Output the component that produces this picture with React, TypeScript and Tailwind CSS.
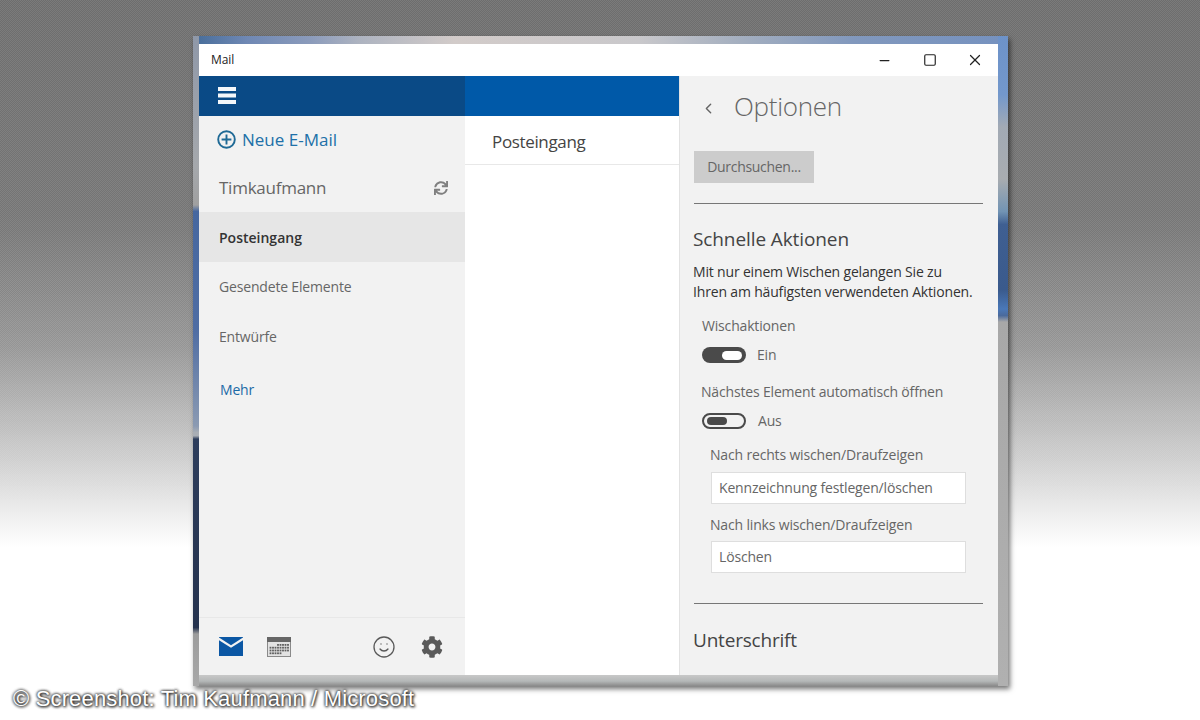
import React from "react";
import { ChevronLeft, Minus, Square, X, Smile } from "lucide-react";
import { FaCog, FaSync } from "react-icons/fa";

const font = "font-['Open_Sans','Noto_Sans',sans-serif]";

function MailIcon() {
  return (
    <svg width="24" height="19" viewBox="0 0 24 19">
      <path d="M0 3.2 L12 10.8 L24 3.2 V19 H0 Z" fill="#0b57a4" />
      <path d="M0 0 H24 V0.6 L12 8.2 L0 0.6 Z" fill="#0b57a4" />
    </svg>
  );
}

function CalendarIcon() {
  const dots = [];
  for (let r = 0; r < 4; r++) {
    for (let c = 0; c < 8; c++) {
      const off = (r === 0 && c < 3) || (r === 3 && c > 4);
      if (!off) dots.push(<rect key={r + "-" + c} x={2.6 + c * 2.5} y={7 + r * 2.8} width="1.8" height="1.8" fill="#5e5e5e" />);
    }
  }
  return (
    <svg width="24" height="20" viewBox="0 0 24 20">
      <rect x="0.5" y="0.5" width="23" height="19" fill="#e2e2e2" stroke="#8a8a8a" />
      <rect x="0" y="0" width="24" height="5" fill="#666666" />
      {dots}
    </svg>
  );
}

function Toggle({ on }: { on: boolean }) {
  return on ? (
    <div className="w-[44px] h-[16px] rounded-full bg-[#4a4a4a] flex items-center justify-end pr-[4px]">
      <div className="w-[20px] h-[9px] rounded-full bg-white" />
    </div>
  ) : (
    <div className="w-[44px] h-[16px] rounded-full border-2 border-[#4a4a4a] flex items-center pl-[3px]">
      <div className="w-[20px] h-[8px] rounded-full bg-[#4a4a4a]" />
    </div>
  );
}

export default function App() {
  return (
    <div className={`${font} relative w-[1200px] h-[720px] overflow-hidden bg-[linear-gradient(180deg,#767676_0%,#7e7e7e_30%,#9e9e9e_48%,#dedede_67%,#ffffff_76%)] pl-[193px] pt-[36px]`}>
      <div className="absolute inset-0 bg-[repeating-conic-gradient(rgba(0,0,0,0.07)_0_25%,rgba(255,255,255,0.04)_0_50%)] bg-[length:2px_2px] [mask-image:linear-gradient(180deg,black_0%,black_40%,transparent_72%)]" />
      <div className="relative w-[815px] h-[650px] flex shadow-[2px_3px_5px_rgba(0,0,0,0.55)]">
        <div className="w-[6px] bg-[linear-gradient(180deg,#8f98a8_0%,#a5a8ac_20%,#a0a0a0_26%,#46679f_27%,#4f6da3_45%,#8b9ab2_60%,#a9aeb5_61%,#a9aeb5_61.5%,#2d3d5c_62%,#25324e_91%,#9c9c9c_92%,#a8a8a8_100%)]" />
        <div className="w-[799px] flex flex-col">
          <div className="h-[8px] bg-[linear-gradient(90deg,#4a6f9c_0%,#6f88b4_6%,#8b9bbb_14%,#adb3c0_20%,#d2cbc9_32%,#c9c8cb_55%,#a3aebf_68%,#8198bd_82%,#7692bf_100%)]" />
          <div className="h-[631px] bg-white flex flex-col">
            <div className="h-[32px] shrink-0 flex items-center justify-between pl-[12px] pr-[14px]">
              <span className="text-[12px] text-[#222] tracking-[-0.1px]">Mail</span>
              <div className="flex items-center text-[#222]">
                <Minus size={15} strokeWidth={2} />
                <Square size={14} strokeWidth={2} className="ml-[31px]" />
                <X size={18} strokeWidth={1.6} className="ml-[29px]" />
              </div>
            </div>
            <div className="flex flex-1 min-h-0">
              <div className="w-[266px] flex flex-col bg-[#f2f2f2]">
                <div className="h-[40px] bg-[#0a4a86] flex items-center pl-[19px] pb-[1px]">
                  <svg width="18" height="17" viewBox="0 0 18 17" fill="#f4f7fa">
                    <rect x="0" y="0" width="18" height="4" />
                    <rect x="0" y="6.5" width="18" height="4" />
                    <rect x="0" y="13" width="18" height="4" />
                  </svg>
                </div>
                <div className="h-[48px] flex items-center pl-[18px] pb-[2px] gap-[6px] text-[#2070a8]">
                  <svg width="19" height="19" viewBox="0 0 19 19" fill="none" stroke="#1f6a96" strokeWidth="1.9">
                    <circle cx="9.5" cy="9.5" r="8.3" />
                    <path d="M9.5 4.6V14.4M4.6 9.5H14.4" />
                  </svg>
                  <span className="text-[17px] leading-none">Neue E-Mail</span>
                </div>
                <div className="h-[48px] flex items-center justify-between pl-[20px] pr-[17px]">
                  <span className="text-[17px] text-[#666] tracking-[-0.25px]">Timkaufmann</span>
                  <FaSync size={14} className="text-[#808080]" />
                </div>
                <div className="h-[50px] bg-[#e6e6e6] flex items-center pl-[20px] text-[14px] font-semibold text-[#333]">Posteingang</div>
                <div className="h-[50px] flex items-center pl-[20px] pb-[2px] text-[14px] text-[#666] tracking-[-0.17px]">Gesendete Elemente</div>
                <div className="h-[50px] flex items-center pl-[20px] pb-[2px] text-[14px] text-[#666] tracking-[-0.17px]">Entwürfe</div>
                <div className="h-[54px] flex items-center pl-[21px] text-[14px] text-[#1c6aa6] tracking-[-0.17px]">Mehr</div>
                <div className="flex-1" />
                <div className="h-[58px] border-t border-[#e8e8e8] flex items-center pl-[20px] pr-[22px]">
                  <MailIcon />
                  <div className="ml-[24px]"><CalendarIcon /></div>
                  <div className="flex-1" />
                  <Smile size={24} strokeWidth={1.3} className="text-[#5a5a5a]" />
                  <div className="ml-[25px]"><FaCog size={22} className="text-[#5a5a5a]" /></div>
                </div>
              </div>
              <div className="w-[214px] flex flex-col bg-white">
                <div className="h-[40px] bg-[#0059a8]" />
                <div className="h-[49px] border-b border-[#e8e8e8] flex items-center pl-[27px] pt-[3px] text-[17px] text-[#444] tracking-[-0.35px]">Posteingang</div>
              </div>
              <div className="w-[319px] flex flex-col bg-[#f2f2f2] border-l border-[#e2e2e2] pl-[14px] pr-[15px] tracking-[-0.17px]">
                <div className="h-[62px] flex items-center pb-[2px] text-[#666]">
                  <ChevronLeft size={17} strokeWidth={2} className="ml-[6px] mt-[5px]" />
                  <span className="ml-[17px] text-[26px] font-light leading-none tracking-[-0.3px]">Optionen</span>
                </div>
                <div className="mt-[13px] w-[120px] h-[32px] bg-[#cccccc] flex items-center justify-center pb-[2px] text-[14px] text-[#666] tracking-[-0.3px]">Durchsuchen...</div>
                <div className="mt-[20px] h-px bg-[#777]" />
                <div className="mt-[21px] -ml-px text-[19px] leading-[28px] text-[#444] tracking-[-0.1px]">Schnelle Aktionen</div>
                <div className="mt-[9px] -ml-px text-[14px] leading-[20px] text-[#333] whitespace-nowrap">Mit nur einem Wischen gelangen Sie zu<br />Ihren am häufigsten verwendeten Aktionen.</div>
                <div className="mt-[14px] ml-[8px] text-[14px] leading-[20px] text-[#666]">Wischaktionen</div>
                <div className="mt-[9px] ml-[8px] flex items-center gap-[11px] text-[14px] leading-[20px] text-[#666]"><Toggle on /><span>Ein</span></div>
                <div className="mt-[17px] ml-[7px] text-[14px] leading-[20px] text-[#666] whitespace-nowrap">Nächstes Element automatisch öffnen</div>
                <div className="mt-[9px] ml-[8px] flex items-center gap-[12px] text-[14px] leading-[20px] text-[#666]"><Toggle on={false} /><span>Aus</span></div>
                <div className="mt-[14px] ml-[16px] text-[14px] leading-[20px] text-[#666]">Nach rechts wischen/Draufzeigen</div>
                <div className="mt-[7px] ml-[17px] w-[255px] h-[32px] bg-white border border-[#dedede] flex items-center pl-[7px] pb-[2px] text-[14px] text-[#666] whitespace-nowrap">Kennzeichnung festlegen/löschen</div>
                <div className="mt-[11px] ml-[16px] text-[14px] leading-[20px] text-[#666]">Nach links wischen/Draufzeigen</div>
                <div className="mt-[6px] ml-[17px] w-[255px] h-[32px] bg-white border border-[#dedede] flex items-center pl-[7px] pb-[2px] text-[14px] text-[#666]">Löschen</div>
                <div className="mt-[30px] h-px bg-[#777]" />
                <div className="mt-[22px] -ml-px text-[19px] leading-[28px] text-[#444] tracking-[-0.2px]">Unterschrift</div>
              </div>
            </div>
          </div>
          <div className="h-[11px] bg-[linear-gradient(180deg,#c8c8c8_0%,#b5b8b8_55%,#8a8a8a_100%)]" />
        </div>
        <div className="w-[10px] bg-[linear-gradient(180deg,#6d92c8_0%,#7398cc_9%,#a2aab4_14%,#a8acb0_22%,#7294b4_27%,#3f5f92_29%,#3a5a8c_39%,#4a78b8_42%,#4a6a9c_43%,#a8a8a8_44%,#b0b0b0_100%)]" />
      </div>
      <div className="absolute left-[13px] top-[685px] text-[22px] leading-[28px] text-white tracking-[0.16px] font-['Liberation_Sans',sans-serif] [text-shadow:0_0_3px_#333,0_0_3px_#333,1px_1px_3px_#222]">© Screenshot: Tim Kaufmann / Microsoft</div>
    </div>
  );
}
